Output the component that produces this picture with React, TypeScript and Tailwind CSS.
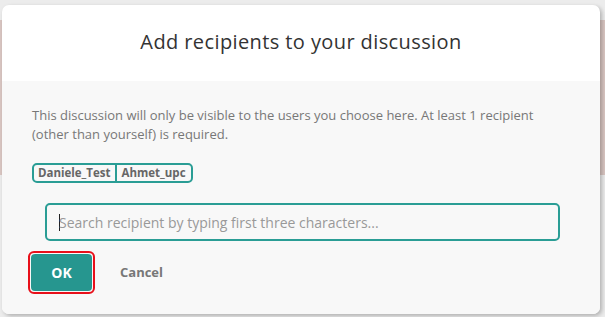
export default function App() {
  return (
    <div className="relative h-[317px] w-[605px] overflow-hidden bg-[#ececec] font-['Open_Sans',sans-serif]">
      <div className="absolute left-0 right-0 top-[20px] h-[155px] bg-[#d9c6c2]" />
      <div className="relative ml-[2px] mt-[5px] flex h-[309px] w-[598px] flex-col overflow-hidden rounded-[7px] bg-white shadow-[2px_2px_4px_rgba(0,0,0,0.25)]">
        <div className="flex h-[76px] shrink-0 items-center justify-center pb-[2px]">
          <h2 className="text-[20px] tracking-[0.4px] text-[#333]">Add recipients to your discussion</h2>
        </div>
        <div className="flex flex-1 flex-col bg-[#f8f8f8] px-[30px] pt-[25px]">
          <p className="text-[13px] leading-[19px] text-[#777]">
            This discussion will only be visible to the users you choose here. At least 1 recipient (other than yourself) is required.
          </p>
          <div className="mt-[19px] flex self-start rounded-[5px] border-2 border-[#2a9d95]">
            <span className="px-[4px] text-[11.5px] font-bold leading-[16px] text-[#666]">Daniele_Test</span>
            <span className="border-l-2 border-[#2a9d95] px-[5px] text-[11.5px] font-bold leading-[16px] text-[#666]">Ahmet_upc</span>
          </div>
          <div className="ml-[13px] mr-[10px] mt-[20px] flex h-[38px] items-center rounded-[5px] border-2 border-[#2a9d95] bg-[#f8f8f8] pl-[12px]">
            <span className="h-[17px] w-px bg-[#222]" />
            <span className="-ml-px text-[14px] text-[#999]">Search recipient by typing first three characters...</span>
          </div>
          <div className="mt-[10px] flex items-center">
            <div className="-ml-[4px] rounded-[6px] border-2 border-[#e8101a] p-px">
              <button className="flex h-[37px] w-[61px] items-center justify-center rounded-[4px] bg-[#26968f] text-[14px] font-bold text-white">
                OK
              </button>
            </div>
            <span className="ml-[25px] text-[13px] font-bold text-[#777]">Cancel</span>
          </div>
        </div>
      </div>
    </div>
  );
}
